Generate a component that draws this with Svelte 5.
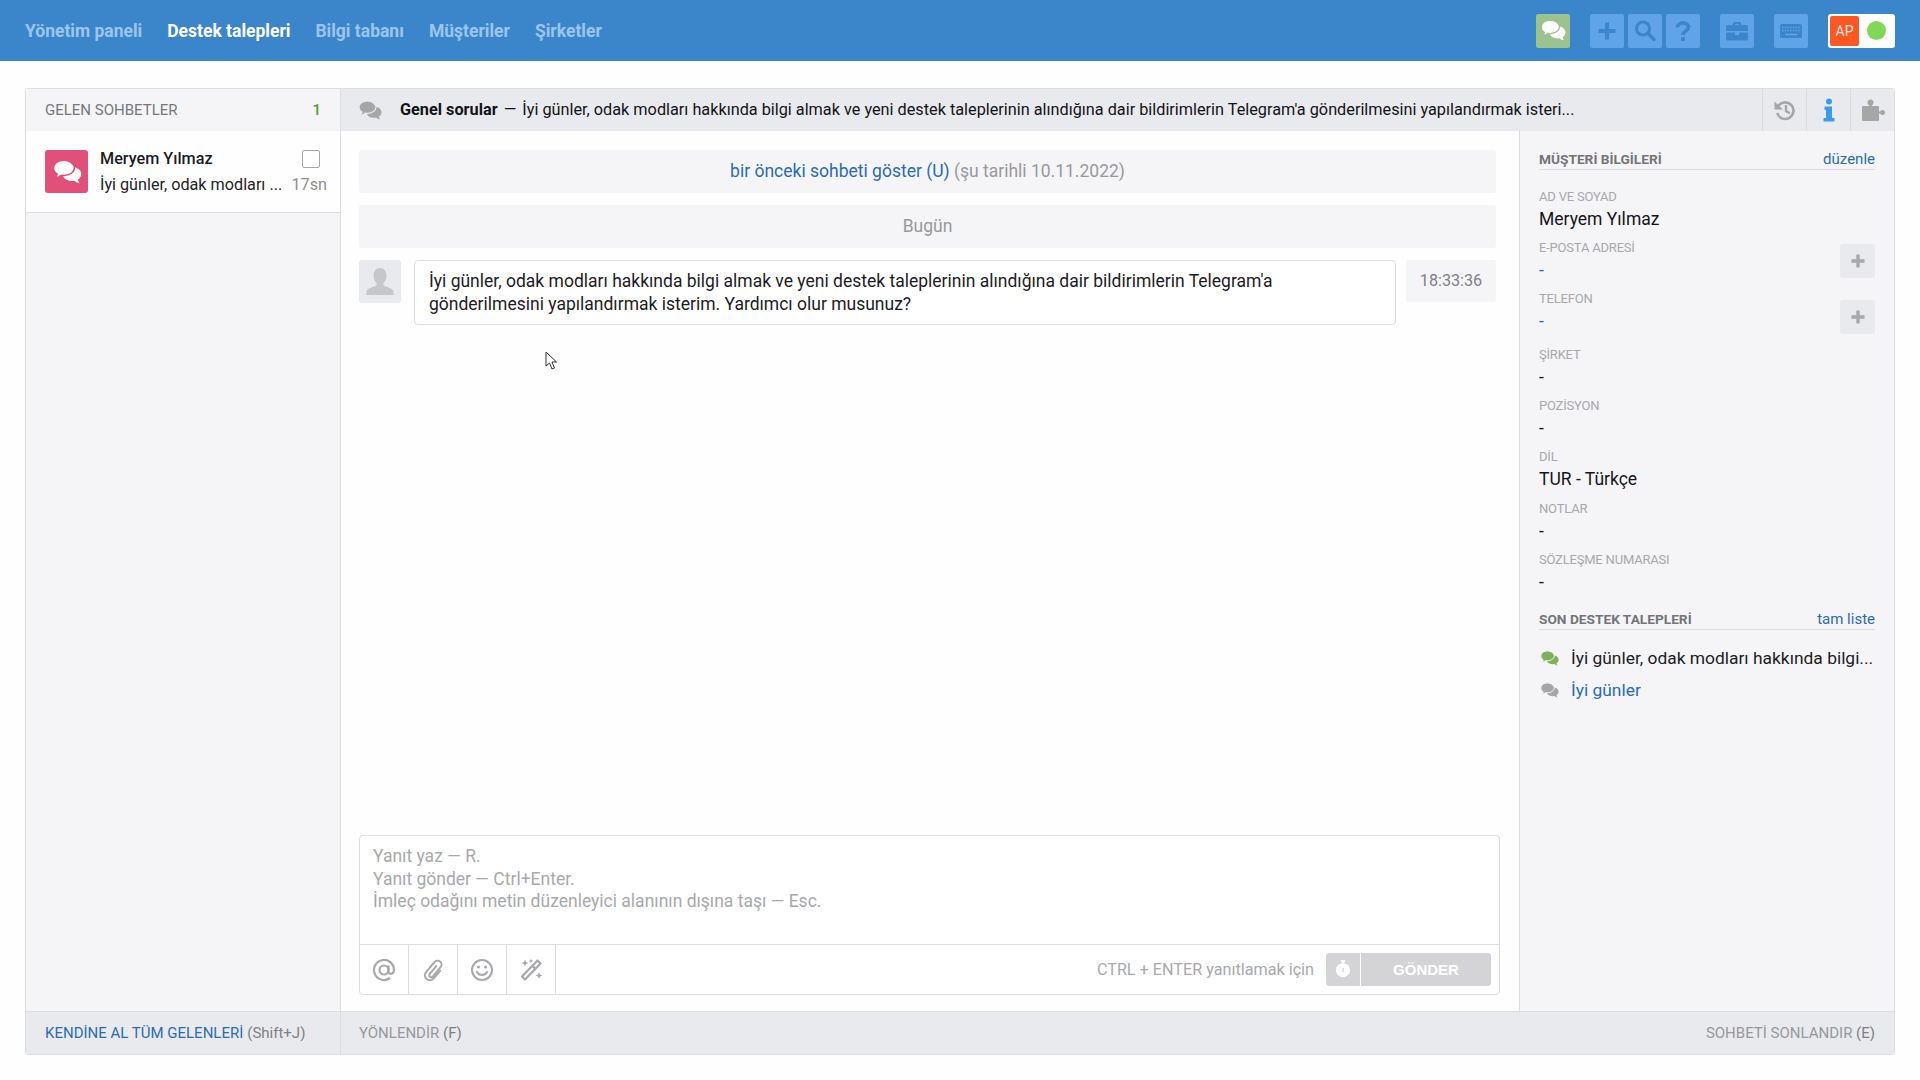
<script lang="ts">
	const nav = [
		{ label: 'Yönetim paneli', active: false },
		{ label: 'Destek talepleri', active: true },
		{ label: 'Bilgi tabanı', active: false },
		{ label: 'Müşteriler', active: false },
		{ label: 'Şirketler', active: false }
	];

	const frontBubble = 'M9.500 1C4.800 1 1 3.800 1 7.300c0 2 1.200 3.700 3.100 4.900-.3 1.200-.9 2.200-1.800 3 1.900-.1 3.700-.9 5-2.100.7.1 1.400.2 2.200.2 4.700 0 8.500-2.800 8.500-6S14.200 1 9.500 1z';
	const backBubble = 'M16 6.500c4.200 0 7.500 2.500 7.500 5.700 0 1.800-1 3.400-2.700 4.500.2 1.100.8 2 1.600 2.800-1.700-.1-3.300-.8-4.400-1.900-.6.1-1.300.2-2 .2-4.200 0-7.500-2.500-7.500-5.600S11.800 6.500 16 6.500z';

	const fields = [
		{ label: 'AD VE SOYAD', value: 'Meryem Yılmaz', big: true },
		{ label: 'E-POSTA ADRESİ', value: '-', link: true, add: true },
		{ label: 'TELEFON', value: '-', link: true, add: true, tall: true },
		{ label: 'ŞİRKET', value: '-' },
		{ label: 'POZİSYON', value: '-' },
		{ label: 'DİL', value: 'TUR - Türkçe', big: true, wide: true },
		{ label: 'NOTLAR', value: '-' },
		{ label: 'SÖZLEŞME NUMARASI', value: '-' }
	];
</script>

{#snippet chatIcon(color: string, bg: string, w: number, h: number)}
	<svg width={w} height={h} viewBox="0 0 24 21">
		<path fill={color} d={backBubble} />
		<path fill={color} stroke={bg} stroke-width="1.200" d={frontBubble} />
	</svg>
{/snippet}

<header class="topbar">
	<nav class="nav">
		{#each nav as item}
			<span class="nav-item" class:active={item.active}>{item.label}</span>
		{/each}
	</nav>
	<div class="tools">
		<span class="tool green">
			{@render chatIcon('#fff', '#9ac38e', 26, 23)}
		</span>
		<span class="tool gap-l">
			<svg width="22" height="22" viewBox="0 0 22 22"><path fill="#3b86cb" d="M9 2.500h4v6.500h6.500v4H13v6.500H9V13H2.500V9H9z" /></svg>
		</span>
		<span class="tool">
			<svg width="24" height="24" viewBox="0 0 24 24"><circle cx="10" cy="9.500" r="6.500" fill="none" stroke="#3b86cb" stroke-width="3" /><path d="M15 14.500l6 6" stroke="#3b86cb" stroke-width="3.500" stroke-linecap="round" /></svg>
		</span>
		<span class="tool">
			<svg width="22" height="24" viewBox="0 0 22 24"><path fill="none" stroke="#3b86cb" stroke-width="3.600" d="M5.500 8.500C5.500 5.500 8 4 11 4s5.500 1.600 5.500 4.300c0 3.700-5.500 3.700-5.500 7.700" /><rect x="9" y="18" width="4" height="4" rx="1" fill="#3b86cb" /></svg>
		</span>
		<span class="tool gap-m">
			<svg width="22" height="20" viewBox="0 0 22 20"><path fill="#3b86cb" d="M7 4V2.500C7 1.700 7.700 1 8.500 1h5c.8 0 1.500.7 1.500 1.500V4h5c1 0 2 .8 2 2v4H0V6c0-1.200 1-2 2-2zm2 0h4V3H9zM0 11.500h9V14h4v-2.500h9V18c0 1-1 1.500-2 1.500H2c-1 0-2-.5-2-1.500z" /></svg>
		</span>
		<span class="tool gap-m">
			<svg width="24" height="18" viewBox="0 0 24 18"><rect width="22" height="14" x="1" y="2" rx="1.500" fill="#3b86cb" /><path stroke="#5fa4e6" stroke-width="1.300" stroke-dasharray="1.500 1.200" d="M3 5.500h18M3 8.500h18" /><path stroke="#5fa4e6" stroke-width="1.500" d="M6 12.500h12" /></svg>
		</span>
		<span class="user-pill gap-m">
			<span class="avatar-ap">AP</span>
			<span class="dot"></span>
		</span>
	</div>
</header>

<main class="page">
	<section class="panel">
		<aside class="left">
			<div class="left-head">
				<span>GELEN SOHBETLER</span>
				<span class="count">1</span>
			</div>
			<div class="chat-item">
				<span class="chat-icon">
					{@render chatIcon('#fff', '#e05078', 30, 26)}
				</span>
				<div class="chat-info">
					<div class="chat-line">
						<strong>Meryem Yılmaz</strong>
						<span class="check"></span>
					</div>
					<div class="chat-line lower">
						<span class="snippet">İyi günler, odak modları ...</span>
						<span class="ago">17sn</span>
					</div>
				</div>
			</div>
			<div class="left-fill"></div>
			<div class="left-foot">
				<span class="link">KENDİNE AL TÜM GELENLERİ</span> <span class="muted">(Shift+J)</span>
			</div>
		</aside>

		<div class="right">
			<div class="title-bar">
				<span class="title-icon">{@render chatIcon('#a6a6a6', '#e9eaee', 24, 21)}</span>
				<div class="title-text"><strong>Genel sorular</strong> <span class="dash">—</span> İyi günler, odak modları hakkında bilgi almak ve yeni destek taleplerinin alındığına dair bildirimlerin Telegram'a gönderilmesini yapılandırmak isteri...</div>
				<span class="head-btn">
					<svg width="24" height="24" viewBox="0 0 24 24"><path fill="none" stroke="#a6a6a6" stroke-width="2.600" d="M5 8.500a8.300 8.300 0 1 1-.8 6.500" /><path fill="#a6a6a6" d="M1.500 3.500l8.500 8H1.500z" /><path fill="none" stroke="#a6a6a6" stroke-width="2.400" d="M13 7v6l3.800 2.300" /></svg>
				</span>
				<span class="head-btn">
					<svg width="14" height="24" viewBox="0 0 14 24"><circle cx="7" cy="3.500" r="3" fill="#3d9be9" /><path fill="#3d9be9" d="M2.500 8.500h7.500V20H12.500v3.500h-11V20H4v-8H2.500z" /></svg>
				</span>
				<span class="head-btn">
					<svg width="26" height="26" viewBox="0 0 26 26" fill="#a6a6a6"><rect x="2" y="9" width="17" height="15" rx="1" /><circle cx="10.500" cy="5.500" r="3" /><rect x="9" y="6" width="3" height="4" /><circle cx="22.500" cy="15.500" r="2.500" /><rect x="18" y="14.500" width="4" height="2" /></svg>
				</span>
			</div>

			<div class="middle">
				<div class="chat">
					<div class="thread">
						<div class="band"><span class="link">bir önceki sohbeti göster (U)</span>&nbsp;<span class="muted">(şu tarihli 10.11.2022)</span></div>
						<div class="band muted">Bugün</div>
						<div class="message">
							<span class="msg-avatar">
								<svg width="30" height="32" viewBox="0 0 30 32"><path fill="#c6c7cb" d="M15 2c4 0 6.500 3 6.500 7.500 0 3-1 5.500-3 7.500v2.500c3 1.500 8.500 2.500 10 5.500V29H1.500v-4c1.500-3 7-4 10-5.500V17c-2-2-3-4.500-3-7.500C8.500 5 11 2 15 2z" /></svg>
							</span>
							<div class="bubble">İyi günler, odak modları hakkında bilgi almak ve yeni destek taleplerinin alındığına dair bildirimlerin Telegram'a gönderilmesini yapılandırmak isterim. Yardımcı olur musunuz?</div>
							<span class="msg-time">18:33:36</span>
						</div>
					</div>

					<div class="editor">
						<div class="placeholder">Yanıt yaz — R.<br />Yanıt gönder — Ctrl+Enter.<br />İmleç odağını metin düzenleyici alanının dışına taşı — Esc.</div>
						<div class="toolbar">
							<span class="tb-btn">
								<svg width="24" height="24" viewBox="0 0 24 24"><g fill="none" stroke="#a8a8ac" stroke-width="2.200"><circle cx="12" cy="12" r="4.500" /><path d="M16.500 7.500v6c0 3.500 5.500 3 5.500-1.500a10 10 0 1 0-4 8" /></g></svg>
							</span>
							<span class="tb-btn">
								<svg width="24" height="24" viewBox="0 0 24 24"><path transform="rotate(40 12 12)" fill="none" stroke="#a8a8ac" stroke-width="2" stroke-linecap="round" d="M12 7v10a2 2 0 0 0 4 0V5a4 4 0 0 0-8 0v13a5 5 0 0 0 10 0V8" /></svg>
							</span>
							<span class="tb-btn">
								<svg width="24" height="24" viewBox="0 0 24 24"><g fill="none" stroke="#a8a8ac" stroke-width="2"><circle cx="12" cy="12" r="10" /><path d="M7 14c2 4 8 4 10 0" stroke-linecap="round" /></g><circle cx="8.500" cy="9" r="1.500" fill="#a8a8ac" /><circle cx="15.500" cy="9" r="1.500" fill="#a8a8ac" /></svg>
							</span>
							<span class="tb-btn">
								<svg width="24" height="24" viewBox="0 0 24 24"><path fill="none" stroke="#a8a8ac" stroke-width="2.200" stroke-linejoin="round" d="M18.500 2.500l3 3L6 21.500l-3-3zM13.500 8l3 3" /><path fill="#a8a8ac" d="M6 1.500l1 2.500 2.500 1-2.500 1-1 2.500-1-2.500L2.500 5 5 4zM20 14l1 2.500 2.500 1-2.500 1-1 2.500-1-2.500-2.500-1 2.500-1zM12 1l.7 1.300L14 3l-1.300.7L12 5l-.7-1.300L10 3l1.300-.7z" /></svg>
							</span>
							<span class="hint">CTRL + ENTER yanıtlamak için</span>
							<span class="timer-btn">
								<svg width="16" height="20" viewBox="0 0 16 20"><path fill="#fff" d="M6 0h4v2H9v1.200A7 7 0 1 1 7 3.200V2H6z" /><path stroke="#d4d4d6" stroke-width="1.400" d="M8 8v4" /></svg>
							</span>
							<span class="send-btn">GÖNDER</span>
						</div>
					</div>
				</div>

				<aside class="sidebar">
					<div class="side-head">
						<span>MÜŞTERİ BİLGİLERİ</span>
						<span class="link small">düzenle</span>
					</div>
					{#each fields as f}
						<div class="field" class:tall={f.tall} class:wide={f.wide}>
							<div class="field-label">{f.label}</div>
							<div class="field-value" class:big={f.big} class:link={f.link}>{f.value}</div>
							{#if f.add}
								<span class="add-btn">
									<svg width="16" height="16" viewBox="0 0 16 16"><path fill="#a8a8ac" d="M6.300 1.500h3.400v4.800h4.800v3.400H9.700v4.800H6.300V9.700H1.500V6.300h4.800z" /></svg>
								</span>
							{/if}
						</div>
					{/each}
					<div class="side-head second">
						<span>SON DESTEK TALEPLERİ</span>
						<span class="link small">tam liste</span>
					</div>
					<div class="recent">
						{@render chatIcon('#7fb25f', '#f5f5f7', 19, 17)}
						<span class="recent-text">İyi günler, odak modları hakkında bilgi...</span>
					</div>
					<div class="recent">
						{@render chatIcon('#a6a6a6', '#f5f5f7', 19, 17)}
						<span class="recent-text link">İyi günler</span>
					</div>
				</aside>
			</div>

			<div class="foot">
				<span class="muted">YÖNLENDİR <span class="key">(F)</span></span>
				<span class="muted">SOHBETİ SONLANDIR <span class="key">(E)</span></span>
			</div>
		</div>
	</section>
</main>

<svg class="cursor" width="13" height="19" viewBox="0 0 13 19"><path fill="#fff" stroke="#333" stroke-width="1" d="M1 1v14l3.500-3 2.500 6 2.500-1-2.500-6h4.500z" /></svg>

<style>
	:global(body) {
		background: #fefefe;
		font-family: Roboto, "Noto Sans", sans-serif;
		color: #1c1c1f;
	}

	.topbar {
		height: 61px;
		background: #3b86cb;
		display: flex;
		align-items: center;
		justify-content: space-between;
		padding: 0 25px;
	}

	.nav {
		display: flex;
		gap: 25px;
		padding-top: 1px;
	}

	.nav-item {
		font-size: 17.500px;
		font-weight: 700;
		color: #9cc5ee;
	}

	.nav-item.active { color: #fff; }

	.tools {
		display: flex;
		align-items: center;
		gap: 4px;
	}

	.tool {
		width: 34px;
		height: 34px;
		border-radius: 2px;
		background: #5fa4e6;
		display: flex;
		align-items: center;
		justify-content: center;
	}

	.tool.green {
		background: #9ac38e;
		margin-right: 16px;
	}

	.gap-m { margin-left: 16px; }

	.user-pill {
		width: 67px;
		height: 34px;
		background: #fff;
		border-radius: 3px;
		display: flex;
		align-items: center;
		padding: 2px;
		box-sizing: border-box;
	}

	.avatar-ap {
		width: 29px;
		height: 30px;
		background: #ff5722;
		color: #f6e8e0;
		font-size: 14px;
		border-radius: 2px;
		display: flex;
		align-items: center;
		justify-content: center;
	}

	.dot {
		width: 19px;
		height: 19px;
		border-radius: 50%;
		background: #7fd957;
		margin-left: 8px;
	}

	.page {
		padding: 27px 25px 0;
	}

	.panel {
		display: flex;
		height: 967px;
		box-sizing: border-box;
		border: 1px solid #dcdde2;
		border-radius: 3px;
		box-shadow: 0 2px 3px rgba(0, 0, 0, 0.04);
		overflow: hidden;
	}

	.left {
		width: 314px;
		flex: none;
		display: flex;
		flex-direction: column;
		background: #f5f5f7;
		border-right: 1px solid #dcdde2;
	}

	.left-head {
		height: 42px;
		padding: 0 19px;
		display: flex;
		align-items: center;
		justify-content: space-between;
		font-size: 15px;
		color: #78787c;
	}

	.count {
		color: #4f9a3f;
		font-weight: 500;
	}

	.chat-item {
		height: 82px;
		box-sizing: border-box;
		padding: 19px 13px 0 19px;
		display: flex;
		gap: 12px;
		background: #fefefe;
		border-bottom: 1px solid #dcdde2;
	}

	.chat-icon {
		width: 43px;
		height: 43px;
		flex: none;
		background: #e05078;
		border-radius: 3px;
		display: flex;
		align-items: center;
		justify-content: center;
	}

	.chat-info {
		flex: 1;
		min-width: 0;
	}

	.chat-line {
		display: flex;
		align-items: center;
		justify-content: space-between;
		font-size: 16.200px;
		height: 17px;
		white-space: nowrap;
	}

	.chat-line strong { font-weight: 500; }

	.chat-line.lower {
		margin-top: 9px;
	}

	.snippet { color: #232326; }

	.ago { color: #8d8d91; }

	.check {
		width: 16px;
		height: 16px;
		border: 1px solid #a8a8ac;
		border-radius: 2px;
		background: #fff;
		margin-right: 7px;
	}

	.left-fill { flex: 1; }

	.left-foot {
		height: 43px;
		box-sizing: border-box;
		padding: 0 19px;
		display: flex;
		align-items: center;
		gap: 4px;
		font-size: 15px;
		background: #e9eaee;
		border-top: 1px solid #dcdde2;
	}

	.link { color: #2a6cb4; }
	.muted { color: #98989c; }
	.left-foot .muted { color: #808084; }

	.right {
		flex: 1;
		min-width: 0;
		display: flex;
		flex-direction: column;
	}

	.title-bar {
		height: 42px;
		flex: none;
		display: flex;
		align-items: center;
		background: #e9eaee;
		padding-left: 17px;
		font-size: 16.250px;
		color: #131316;
	}

	.title-icon { flex: none; margin-right: 18px; display: flex; }

	.title-text {
		flex: 1;
		min-width: 0;
		white-space: nowrap;
		overflow: hidden;
		padding-bottom: 1px;
	}

	.title-text strong { font-weight: 700; margin-right: 2px; }
	.dash { margin-right: 2px; }

	.head-btn {
		width: 44px;
		height: 42px;
		flex: none;
		display: flex;
		align-items: center;
		justify-content: center;
		border-left: 1px solid #dcdde2;
		box-sizing: border-box;
	}

	.middle {
		flex: 1;
		min-height: 0;
		display: flex;
	}

	.chat {
		flex: 1;
		min-width: 0;
		display: flex;
		flex-direction: column;
		padding: 19px 19px 16px 18px;
		background: #fefefe;
	}

	.thread {
		flex: 1;
		padding-right: 4px;
		display: flex;
		flex-direction: column;
		gap: 12px;
	}

	.band {
		height: 43px;
		box-sizing: border-box;
		padding-bottom: 1px;
		background: #f5f5f7;
		border-radius: 3px;
		display: flex;
		align-items: center;
		justify-content: center;
		font-size: 17.500px;
	}

	.message {
		display: flex;
		align-items: flex-start;
		gap: 10px;
	}

	.msg-avatar {
		width: 42px;
		height: 43px;
		flex: none;
		background: #e9eaee;
		border-radius: 3px;
		display: flex;
		align-items: center;
		justify-content: center;
		margin-right: 3px;
	}

	.bubble {
		flex: 1;
		min-width: 0;
		box-sizing: border-box;
		height: 65px;
		padding: 9px 14px 0;
		background: #fff;
		border: 1px solid #dcdde2;
		border-radius: 4px;
		font-size: 17.500px;
		line-height: 23px;
	}

	.msg-time {
		width: 90px;
		height: 42px;
		box-sizing: border-box;
		padding-bottom: 1px;
		flex: none;
		background: #f5f5f7;
		border-radius: 3px;
		display: flex;
		align-items: center;
		justify-content: center;
		font-size: 16.200px;
		color: #808084;
	}

	.editor {
		height: 160px;
		flex: none;
		box-sizing: border-box;
		border: 1px solid #dcdde2;
		border-radius: 4px;
		display: flex;
		flex-direction: column;
		background: #fff;
	}

	.placeholder {
		height: 108px;
		flex: none;
		box-sizing: border-box;
		padding: 9px 13px 0;
		font-size: 17.500px;
		line-height: 22.500px;
		color: #a8a8ac;
	}

	.toolbar {
		flex: 1;
		display: flex;
		align-items: center;
		border-top: 1px solid #dcdde2;
		padding-right: 8px;
	}

	.tb-btn {
		width: 49px;
		height: 100%;
		box-sizing: border-box;
		display: flex;
		align-items: center;
		justify-content: center;
		border-right: 1px solid #dcdde2;
	}

	.hint {
		margin-left: auto;
		margin-right: 12px;
		font-size: 16.200px;
		color: #a8a8ac;
	}

	.timer-btn {
		width: 34px;
		height: 33px;
		background: #d4d4d6;
		border-radius: 3px 0 0 3px;
		display: flex;
		align-items: center;
		justify-content: center;
		margin-right: 1px;
	}

	.send-btn {
		width: 130px;
		height: 33px;
		background: #d4d4d6;
		border-radius: 0 3px 3px 0;
		display: flex;
		align-items: center;
		justify-content: center;
		font-family: "Liberation Sans", Arial, sans-serif;
		font-weight: 700;
		font-size: 15px;
		color: #fff;
	}

	.sidebar {
		width: 375px;
		flex: none;
		box-sizing: border-box;
		padding: 19px 19px 0;
		background: #f5f5f7;
		border-left: 1px solid #dcdde2;
	}

	.side-head {
		display: flex;
		justify-content: space-between;
		align-items: center;
		height: 18px;
		padding-bottom: 1px;
		border-bottom: 1px solid #dcdde2;
		font-size: 13.700px;
		font-weight: 700;
		color: #747478;
		margin-bottom: 20px;
	}

	.side-head.second {
		margin-top: 6px;
		margin-bottom: 12px;
	}

	.side-head .small {
		font-size: 15px;
		font-weight: 400;
	}

	.field {
		position: relative;
		height: 51px;
	}

	.field.tall { height: 56px; }
	.field.wide { height: 52px; }

	.field-label {
		font-size: 13px;
		line-height: 14px;
		letter-spacing: -0.2px;
		color: #a8a8ac;
	}

	.field-value {
		font-size: 17.500px;
		line-height: 22px;
		margin-top: 4px;
		color: #16161a;
	}

	.field-value.link { color: #2a6cb4; }

	.add-btn {
		position: absolute;
		right: 0;
		top: 3px;
		width: 35px;
		height: 34px;
		background: #e9eaee;
		border-radius: 3px;
		display: flex;
		align-items: center;
		justify-content: center;
	}

	.field.tall .add-btn { top: 8px; }

	.recent {
		display: flex;
		align-items: center;
		gap: 12px;
		height: 32px;
		font-size: 17.400px;
		white-space: nowrap;
	}

	.recent :global(svg) { flex: none; margin-left: 1px; }

	.foot {
		height: 43px;
		flex: none;
		box-sizing: border-box;
		padding: 0 19px 0 18px;
		display: flex;
		align-items: center;
		justify-content: space-between;
		font-size: 15px;
		background: #e9eaee;
		border-top: 1px solid #dcdde2;
		border-left: 0;
	}

	.key { color: #808084; }

	.cursor {
		position: absolute;
		left: 545px;
		top: 351px;
	}
</style>
